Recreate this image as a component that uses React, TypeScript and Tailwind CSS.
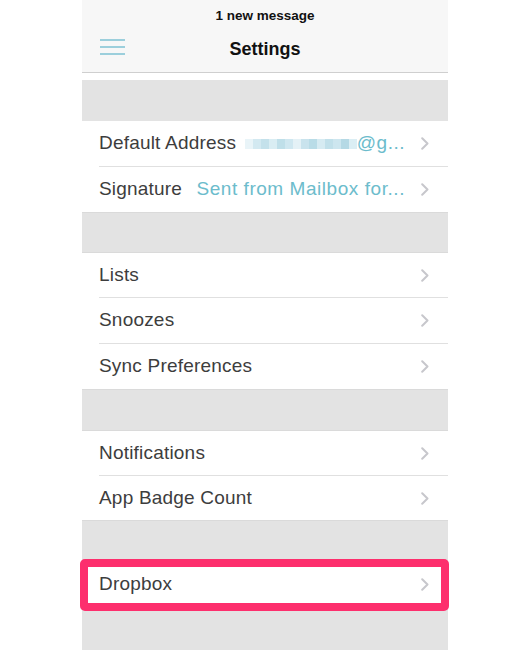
import React from "react";

const Chevron = () => (
  <svg width="8" height="13" viewBox="0 0 8 13" className="shrink-0">
    <polyline points="1.2,1.2 6.5,6.5 1.2,11.8" fill="none" stroke="#c7c7cc" strokeWidth="2" strokeLinecap="round" strokeLinejoin="round" />
  </svg>
);

const pix = [
  "#e9f4f8", "#d3e9f1", "#c4e1eb", "#d9edf3", "#bfdfe9", "#cfe7f0", "#e4f1f6", "#c9e3ed",
  "#b9dce7", "#d6ebf2", "#c1e0ea", "#cde6ef", "#b5d9e5", "#dbeef4",
];

const Row = ({
  label,
  h,
  value,
  sep = false,
}: {
  label: string;
  h: string;
  value?: React.ReactNode;
  sep?: boolean;
}) => (
  <div className="bg-white">
    <div className={`flex items-center pl-[17px] pr-[19px] ${h}`}>
      <span className="text-[19px] text-[#3d3d3d] whitespace-nowrap tracking-[0.2px]">{label}</span>
      <div className="flex-1 flex justify-end pr-[16px] pl-3 min-w-0">{value}</div>
      <Chevron />
    </div>
    {sep && <div className="ml-[17px] h-px bg-[#e0e0e0]" />}
  </div>
);

const Gap = ({ h }: { h: string }) => (
  <div className={`${h} bg-[#e3e3e3] border-t border-b border-[#dadada]`} />
);

export default function App() {
  return (
    <div
      className="w-[528px] h-[650px] bg-white overflow-hidden"
      style={{ fontFamily: '"Liberation Sans", Arial, sans-serif' }}
    >
      <div className="ml-[82px] w-[366px] h-[650px] bg-[#e3e3e3] flex flex-col">
        <div className="h-[73px] bg-[#f7f7f7] border-b border-[#cfcfcf] flex flex-col items-center relative">
          <div className="mt-[7px] text-[13.5px] font-bold text-[#111] leading-[18px]">1 new message</div>
          <div className="mt-[13px] text-[18px] font-bold text-[#111] leading-[22px]">Settings</div>
          <div className="absolute left-[18px] top-[39px] flex flex-col gap-[5.5px]">
            <div className="w-[25px] h-[1.5px] bg-[#9ccfdc]" />
            <div className="w-[25px] h-[1.5px] bg-[#9ccfdc]" />
            <div className="w-[25px] h-[1.5px] bg-[#9ccfdc]" />
          </div>
        </div>
        <div className="h-[7px] bg-white" />
        <div className="h-[41px] bg-[#e3e3e3]" />

        <Row
          label="Default Address"
          h="h-[45px]"
          sep
          value={
            <div className="flex items-center">
              <div className="flex items-center blur-[0.6px]">
                {pix.map((c, i) => (
                  <div key={i} className="w-[8px] h-[10px]" style={{ backgroundColor: c }} />
                ))}
              </div>
              <span className="text-[19px] text-[#6cbccc] tracking-[0.5px] whitespace-nowrap">@g...</span>
            </div>
          }
        />
        <Row
          label="Signature"
          h="h-[45px]"
          value={
            <span className="text-[19px] text-[#6cbccc] tracking-[0.55px] whitespace-nowrap">
              Sent from Mailbox for...
            </span>
          }
        />
        <Gap h="h-[41px]" />
        <Row label="Lists" h="h-[44px]" sep />
        <Row label="Snoozes" h="h-[45px]" sep />
        <Row label="Sync Preferences" h="h-[45px]" />
        <Gap h="h-[42px]" />
        <Row label="Notifications" h="h-[44px]" sep />
        <Row label="App Badge Count" h="h-[44px]" />
        <Gap h="h-[42px]" />
        <div className="relative">
          <Row label="Dropbox" h="h-[45px]" />
          <div className="absolute -left-[2px] top-[-3px] w-[369px] h-[52px] border-[8px] border-[#fd2f6d] rounded-[5px]" />
        </div>
        <div className="flex-1 bg-[#e3e3e3] border-t border-[#dadada]" />
      </div>
    </div>
  );
}
